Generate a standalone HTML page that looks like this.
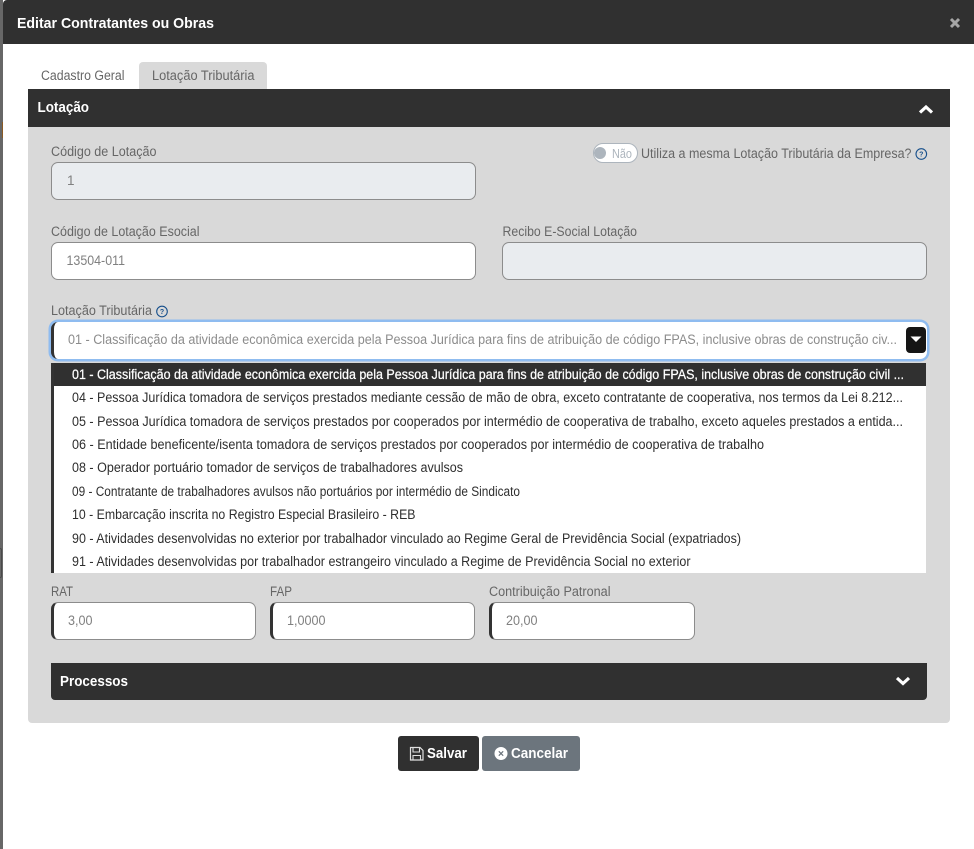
<!DOCTYPE html>
<html lang="pt-BR"><head><meta charset="utf-8"><title>Editar Contratantes ou Obras</title>
<style>
html,body{margin:0;padding:0;width:974px;height:849px;overflow:hidden;background:#fff}
div{position:absolute;box-sizing:border-box}
.inp{height:38px;border:1px solid #8c8c8c;border-radius:7px;background:#fff}
.dis{background:#e9ecef}
.thick{border-left:3px solid #333}
svg{position:absolute;left:0;top:0}
text{font-family:"Liberation Sans",Arial,sans-serif;font-size:13.5px;white-space:pre}
.l{fill:#666}.v{fill:#808080}.o{fill:#2e2e2e}.w{fill:#fff;font-weight:bold}
</style></head><body>
<div style="left:0;top:0;width:3px;height:849px;background:#676767"></div>
<div style="left:2px;top:122px;width:1px;height:16px;background:#8a5a24"></div>
<div style="left:0;top:548px;width:2px;height:30px;border:1px solid #4a4a4a;border-left:0;border-radius:0 3px 3px 0"></div>
<div style="left:3px;top:0;width:971px;height:44px;background:#303030;border-top-left-radius:4px"></div>
<div style="left:139px;top:62px;width:128px;height:27px;background:#d9d9d9;border-radius:4px 4px 0 0"></div>
<div style="left:28px;top:89px;width:922px;height:38px;background:#303030"></div>
<div style="left:28px;top:127px;width:922px;height:596px;background:#d9d9d9;border-radius:0 0 4px 4px"></div>
<div class="inp dis" style="left:51px;top:162px;width:425px"></div>
<div class="inp" style="left:51px;top:242px;width:425px"></div>
<div class="inp dis" style="left:502px;top:242px;width:425px"></div>
<div style="left:593px;top:143px;width:45px;height:20px;border:1px solid #adb5bd;border-radius:10px;background:#fff"></div>
<div style="left:594px;top:147px;width:12px;height:12px;border-radius:50%;background:#adb5bd"></div>
<div style="left:51px;top:322px;width:876px;height:37px;background:#fff;border-left:3px solid #333;border-radius:7px;box-shadow:0 0 0 2.5px #8fbcf0"></div>
<div style="left:906px;top:327px;width:20px;height:26px;background:#151515;border-radius:4px"></div>
<div style="left:51px;top:363px;width:875px;height:210px;background:#fff;border-left:3px solid #333"></div>
<div style="left:54px;top:363px;width:872px;height:23px;background:#303030"></div>
<div class="inp thick" style="left:51px;top:602px;width:205px"></div>
<div class="inp thick" style="left:270px;top:602px;width:205px"></div>
<div class="inp thick" style="left:489px;top:602px;width:206px"></div>
<div style="left:51px;top:663px;width:876px;height:37px;background:#303030;border-radius:0 0 4px 4px"></div>
<div style="left:398px;top:736px;width:81px;height:35px;background:#303030;border-radius:3px"></div>
<div style="left:482px;top:736px;width:98px;height:35px;background:#6c757d;border-radius:3px"></div>
<svg width="974" height="849" viewBox="0 0 974 849">
<text x="17" y="28" class="w" style="font-size:15px" textLength="197" lengthAdjust="spacingAndGlyphs">Editar Contratantes ou Obras</text>
<path d="M951 19l8 8m0-8l-8 8" stroke="#a6a6a6" stroke-width="3" fill="none"/>
<text x="41" y="80" class="l" textLength="83.5" lengthAdjust="spacingAndGlyphs">Cadastro Geral</text>
<text x="152" y="80" class="l" textLength="102.5" lengthAdjust="spacingAndGlyphs">Lotação Tributária</text>
<text x="37.5" y="112" class="w" style="font-size:15px" textLength="51.5" lengthAdjust="spacingAndGlyphs">Lotação</text>
<path d="M920 112.500l6-5.500 6 5.500" stroke="#fff" stroke-width="3.200" fill="none"/>
<text x="51" y="156" class="l" textLength="105.500" lengthAdjust="spacingAndGlyphs">Código de Lotação</text>
<text x="67" y="185" class="v">1</text>
<text x="612" y="158" style="fill:#adb5bd;font-size:13px" textLength="20" lengthAdjust="spacingAndGlyphs">Não</text>
<text x="641" y="158" class="l" textLength="270.500" lengthAdjust="spacingAndGlyphs">Utiliza a mesma Lotação Tributária da Empresa?</text>
<circle cx="921.300" cy="154" r="5.300" fill="none" stroke="#17508c" stroke-width="1.100"/>
<text x="921.300" y="156.500" text-anchor="middle" style="font-size:7px;fill:#17508c;font-weight:bold">?</text>
<text x="51" y="236" class="l" textLength="148.500" lengthAdjust="spacingAndGlyphs">Código de Lotação Esocial</text>
<text x="66.500" y="265" class="v" textLength="58.500" lengthAdjust="spacingAndGlyphs">13504-011</text>
<text x="502.500" y="236" class="l" textLength="134.500" lengthAdjust="spacingAndGlyphs">Recibo E-Social Lotação</text>
<text x="51" y="315" class="l" textLength="101" lengthAdjust="spacingAndGlyphs">Lotação Tributária</text>
<circle cx="162" cy="311.500" r="5.300" fill="none" stroke="#17508c" stroke-width="1.100"/>
<text x="162" y="314" text-anchor="middle" style="font-size:7px;fill:#17508c;font-weight:bold">?</text>
<text x="68" y="344" style="fill:#8c8c8c" textLength="829" lengthAdjust="spacingAndGlyphs">01 - Classificação da atividade econômica exercida pela Pessoa Jurídica para fins de atribuição de código FPAS, inclusive obras de construção civ...</text>
<path d="M910.500 336.500h11l-5.500 5.500z" fill="#fff"/>
<text x="72" y="379" style="fill:#fff;stroke:#fff;stroke-width:.25" textLength="832" lengthAdjust="spacingAndGlyphs">01 - Classificação da atividade econômica exercida pela Pessoa Jurídica para fins de atribuição de código FPAS, inclusive obras de construção civil ...</text>
<text x="72" y="402" class="o" textLength="831" lengthAdjust="spacingAndGlyphs">04 - Pessoa Jurídica tomadora de serviços prestados mediante cessão de mão de obra, exceto contratante de cooperativa, nos termos da Lei 8.212...</text>
<text x="72" y="426" class="o" textLength="831" lengthAdjust="spacingAndGlyphs">05 - Pessoa Jurídica tomadora de serviços prestados por cooperados por intermédio de cooperativa de trabalho, exceto aqueles prestados a entida...</text>
<text x="72" y="449" class="o" textLength="692" lengthAdjust="spacingAndGlyphs">06 - Entidade beneficente/isenta tomadora de serviços prestados por cooperados por intermédio de cooperativa de trabalho</text>
<text x="72" y="472" class="o" textLength="391" lengthAdjust="spacingAndGlyphs">08 - Operador portuário tomador de serviços de trabalhadores avulsos</text>
<text x="72" y="496" class="o" textLength="448" lengthAdjust="spacingAndGlyphs">09 - Contratante de trabalhadores avulsos não portuários por intermédio de Sindicato</text>
<text x="72" y="519" class="o" textLength="343.500" lengthAdjust="spacingAndGlyphs">10 - Embarcação inscrita no Registro Especial Brasileiro - REB</text>
<text x="72" y="543" class="o" textLength="669" lengthAdjust="spacingAndGlyphs">90 - Atividades desenvolvidas no exterior por trabalhador vinculado ao Regime Geral de Previdência Social (expatriados)</text>
<text x="72" y="566" class="o" textLength="618.500" lengthAdjust="spacingAndGlyphs">91 - Atividades desenvolvidas por trabalhador estrangeiro vinculado a Regime de Previdência Social no exterior</text>
<text x="51" y="596" class="l" textLength="22" lengthAdjust="spacingAndGlyphs">RAT</text>
<text x="270" y="596" class="l" textLength="22" lengthAdjust="spacingAndGlyphs">FAP</text>
<text x="489" y="596" class="l" textLength="121.500" lengthAdjust="spacingAndGlyphs">Contribuição Patronal</text>
<text x="68" y="625" class="v" textLength="24.500" lengthAdjust="spacingAndGlyphs">3,00</text>
<text x="287" y="625" class="v" textLength="38.500" lengthAdjust="spacingAndGlyphs">1,0000</text>
<text x="506" y="625" class="v" textLength="31.500" lengthAdjust="spacingAndGlyphs">20,00</text>
<text x="60" y="686" class="w" style="font-size:15px" textLength="68" lengthAdjust="spacingAndGlyphs">Processos</text>
<path d="M897 678l6 5.500 6-5.500" stroke="#fff" stroke-width="3.200" fill="none"/>
<path d="M410.500 747.500h9.500l3 3v9.500h-12.500z" fill="none" stroke="#e0e0e0" stroke-width="1.200"/>
<path d="M413 748v4h6.500v-4M413 760v-4.500h7.500v4.500" fill="none" stroke="#e0e0e0" stroke-width="1.100"/>
<text x="427" y="758" class="w" style="font-size:14.500px" textLength="40" lengthAdjust="spacingAndGlyphs">Salvar</text>
<circle cx="501" cy="753.500" r="6.500" fill="#fff"/>
<path d="M498.800 751.300l4.400 4.400m0-4.400l-4.400 4.400" stroke="#6c757d" stroke-width="1.200" fill="none"/>
<text x="511" y="758" class="w" style="font-size:14.500px" textLength="57" lengthAdjust="spacingAndGlyphs">Cancelar</text>
</svg>
</body></html>
